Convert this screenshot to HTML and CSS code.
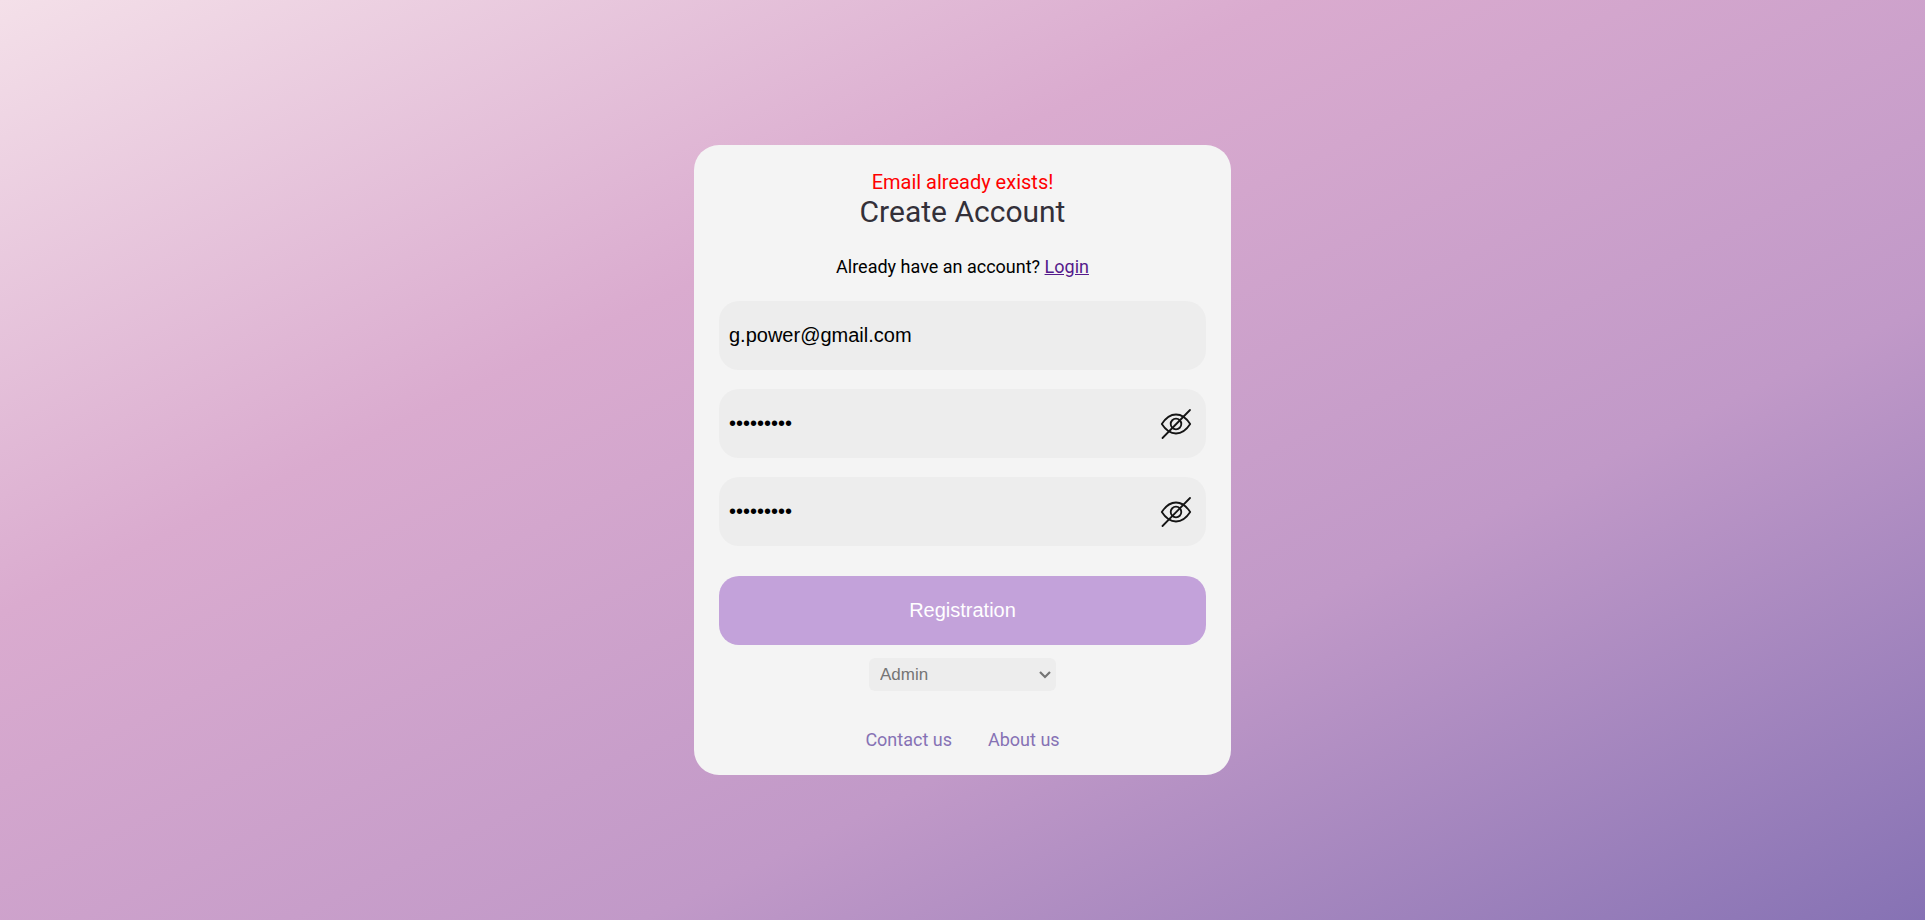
FILE: index.html
```html
<!DOCTYPE html>
<html lang="en">
<head>
<meta charset="utf-8">
<meta name="viewport" content="width=device-width, initial-scale=1">
<title>Create Account</title>
<link rel="stylesheet" href="styles.css">
</head>
<body>
<main class="card">
  <form class="form">
    <p class="error" role="alert">Email already exists!</p>
    <h1 class="title">Create Account</h1>
    <p class="prompt">Already have an account? <a class="login" href="#login">Login</a></p>
    <div class="fields">
      <input class="field" type="email" aria-label="Email" value="g.power@gmail.com">
      <div class="password">
        <input class="field" type="password" aria-label="Password" value="password1">
        <button class="toggle" type="button" aria-label="Show password">
          <svg viewBox="0 0 32 32" fill="none" stroke="currentColor" stroke-width="1.800" stroke-linecap="round" stroke-linejoin="round"><path d="M1.800 16C6 9.500 10.500 6.500 16 6.500S26 9.500 30.200 16C26 22.500 21.500 25.500 16 25.500S6 22.500 1.800 16Z"/><circle cx="16" cy="16" r="5.300"/><path d="M2.500 30L30 2"/></svg>
        </button>
      </div>
      <div class="password">
        <input class="field" type="password" aria-label="Confirm password" value="password1">
        <button class="toggle" type="button" aria-label="Show confirmed password">
          <svg viewBox="0 0 32 32" fill="none" stroke="currentColor" stroke-width="1.800" stroke-linecap="round" stroke-linejoin="round"><path d="M1.800 16C6 9.500 10.500 6.500 16 6.500S26 9.500 30.200 16C26 22.500 21.500 25.500 16 25.500S6 22.500 1.800 16Z"/><circle cx="16" cy="16" r="5.300"/><path d="M2.500 30L30 2"/></svg>
        </button>
      </div>
    </div>
    <button class="submit" type="submit">Registration</button>
    <div class="role">
      <select class="role-select" aria-label="Role">
        <option>Admin</option>
        <option>User</option>
      </select>
      <svg class="role-arrow" viewBox="0 0 12 8" fill="none" stroke="currentColor" stroke-width="2.200"><path d="M1 1L6 6L11 1"/></svg>
    </div>
  </form>
  <nav class="links">
    <a href="#contact">Contact us</a>
    <a href="#about">About us</a>
  </nav>
</main>
</body>
</html>
```
FILE: styles.css
```css
* {
  box-sizing: border-box;
  margin: 0;
}

body {
  min-height: 100vh;
  display: flex;
  align-items: center;
  justify-content: center;
  background: linear-gradient(to bottom right, #f4e0e9, #daabcf, #c199c8, #8672b4);
  font-family: Roboto, sans-serif;
  font-size: 18px;
}

.card {
  width: 100%;
  max-width: 537px;
  padding: 25px;
  border-radius: 25px;
  background: #f4f4f4;
}

.form {
  display: flex;
  flex-direction: column;
  align-items: center;
}

.error {
  color: #ff0000;
  font-size: 20px;
  line-height: 24px;
}

.title {
  color: #333039;
  font-size: 30px;
  font-weight: 400;
  line-height: 36px;
}

.prompt {
  margin: 26px 0 24px;
  line-height: 21px;
}

.login {
  color: #551a8b;
}

.fields {
  width: 100%;
  display: flex;
  flex-direction: column;
  gap: 19px;
}

.field {
  display: block;
  width: 100%;
  height: 69px;
  padding: 0 10px;
  border: 0;
  border-radius: 20px;
  background: #ededed;
  color: #000000;
  font-family: "Liberation Sans", Arial, sans-serif;
  font-size: 20px;
}

.password {
  position: relative;
}

.toggle {
  position: absolute;
  top: 0;
  bottom: 0;
  right: 14px;
  width: 32px;
  padding: 0;
  border: 0;
  background: none;
  color: #151515;
}

.toggle svg {
  display: block;
  width: 32px;
  height: 32px;
}

.submit {
  width: 100%;
  height: 69px;
  margin: 30px 0 13px;
  border: 0;
  border-radius: 20px;
  background: #c3a2da;
  color: #ffffff;
  font-family: "Liberation Sans", Arial, sans-serif;
  font-size: 20px;
}

.role {
  position: relative;
  width: 187px;
}

.role-select {
  display: block;
  appearance: none;
  width: 100%;
  height: 33px;
  padding: 0 24px 0 11px;
  border: 0;
  border-radius: 6px;
  background: #ededed;
  color: #757575;
  font-family: "Liberation Sans", Arial, sans-serif;
  font-size: 17px;
}

.role-arrow {
  position: absolute;
  top: 13px;
  right: 5px;
  width: 12px;
  height: 8px;
  color: #757575;
  pointer-events: none;
}

.links {
  display: flex;
  justify-content: center;
  gap: 36px;
  margin-top: 38px;
  line-height: 21px;
}

.links a {
  color: #8672b4;
  text-decoration: none;
}
```
